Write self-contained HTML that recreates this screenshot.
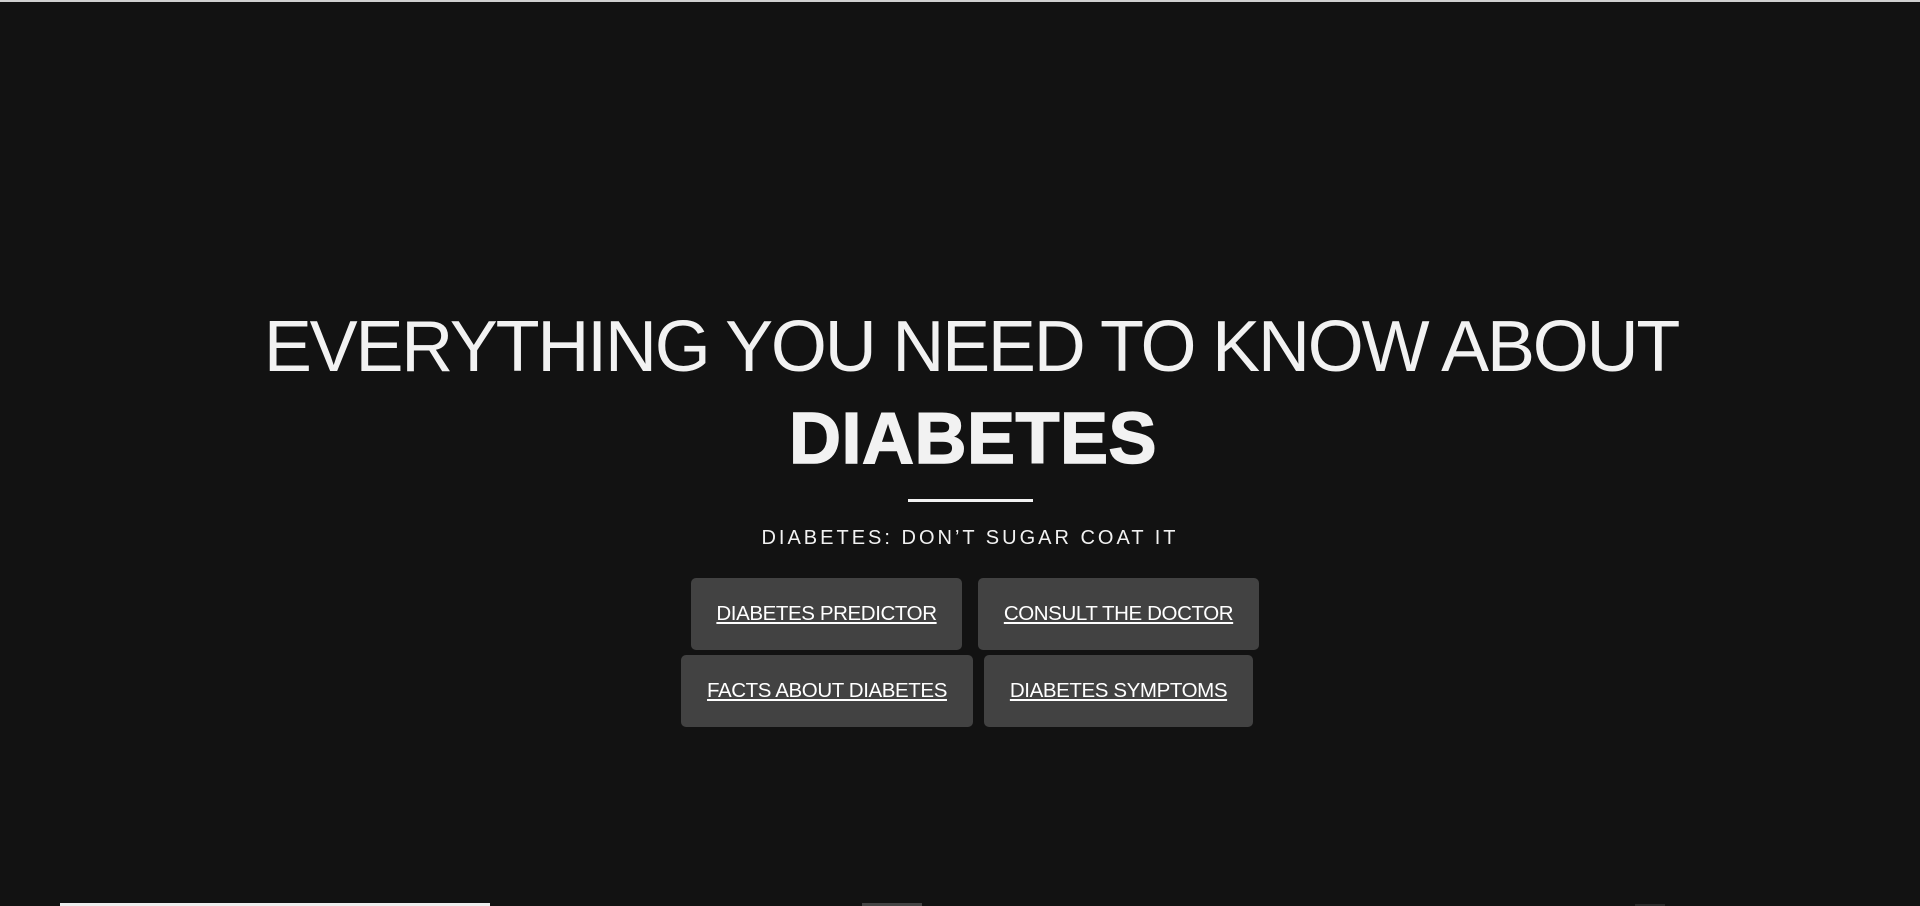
<!DOCTYPE html>
<html><head><meta charset="utf-8"><style>
html,body{margin:0;padding:0;background:#121212;width:1920px;height:906px;overflow:hidden;font-family:"Liberation Sans",Arial,sans-serif;color:#f2f2f2}
.top{position:absolute;left:0;top:0;width:1920px;height:2px;background:#d0d0d0}
.h1{position:absolute;left:0;width:1920px;text-align:center;white-space:nowrap}
.l1{top:306px;font-size:72px;line-height:82px;letter-spacing:-2.2px;padding-left:22px;box-sizing:border-box}
.l2{top:398px;font-size:72px;line-height:82px;font-weight:900;-webkit-text-stroke:1.5px #f2f2f2;letter-spacing:0.5px;padding-left:26px;box-sizing:border-box}
.bar{position:absolute;left:908px;top:499px;width:125px;height:3px;background:#f2f2f2}
.sub{position:absolute;left:0;width:1920px;top:526px;text-align:center;font-size:20px;letter-spacing:3px;line-height:24px;padding-left:20px;box-sizing:border-box}
.btn{position:absolute;background:#424242;border-radius:5px;color:#fff;font-size:20.5px;text-decoration:underline;display:flex;align-items:center;justify-content:center;letter-spacing:-0.4px}
.b1{left:691px;top:578px;width:271px;height:72px}
.b2{left:978px;top:578px;width:281px;height:72px}
.b3{left:681px;top:655px;width:292px;height:72px}
.b4{left:984px;top:655px;width:269px;height:72px}
.bot1{position:absolute;left:60px;top:903px;width:430px;height:3px;background:#eee}
.bot2{position:absolute;left:862px;top:903px;width:60px;height:3px;background:#444}
.bot3{position:absolute;left:1635px;top:904px;width:30px;height:2px;background:#2a2a2a}
</style></head><body>
<div class="top"></div>
<div class="h1 l1">EVERYTHING YOU NEED TO KNOW ABOUT</div>
<div class="h1 l2">DIABETES</div>
<div class="bar"></div>
<div class="sub">DIABETES: DON’T SUGAR COAT IT</div>
<div class="btn b1">DIABETES PREDICTOR</div>
<div class="btn b2">CONSULT THE DOCTOR</div>
<div class="btn b3">FACTS ABOUT DIABETES</div>
<div class="btn b4">DIABETES SYMPTOMS</div>
<div class="bot1"></div><div class="bot2"></div><div class="bot3"></div>
</body></html>
